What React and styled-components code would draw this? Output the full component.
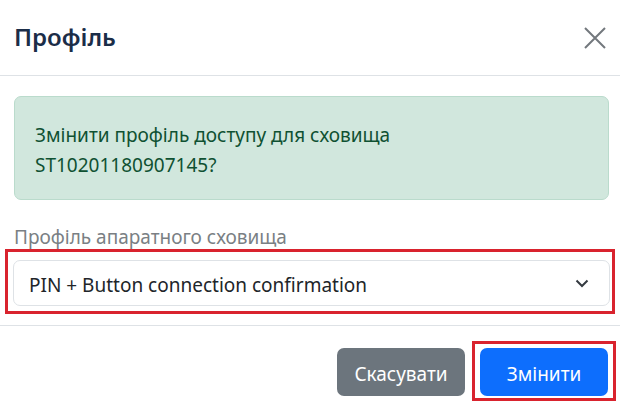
import styled, { createGlobalStyle } from 'styled-components';

const GlobalStyle = createGlobalStyle`
  html, body {
    margin: 0;
    padding: 0;
    background: #fff;
  }
  body {
    font-family: 'Noto Sans', 'Liberation Sans', sans-serif;
    color: #212529;
  }
`;

export default function App() {
  return (
    <>
      <GlobalStyle />
      <ModalStyled>
        <HeaderStyled>
          <TitleStyled>Профіль</TitleStyled>
          <CloseButtonStyled aria-label="Close">
            <svg width="24" height="24" viewBox="0 0 24 24">
              <path d="M2 2 L22 22 M22 2 L2 22" stroke="#73787d" strokeWidth="2" fill="none" />
            </svg>
          </CloseButtonStyled>
        </HeaderStyled>
        <BodyStyled>
          <AlertStyled>
            Змінити профіль доступу для сховища
            <br />
            ST10201180907145?
          </AlertStyled>
          <LabelStyled>Профіль апаратного сховища</LabelStyled>
          <HighlightStyled variant="select">
            <SelectStyled>
              <span>PIN + Button connection confirmation</span>
              <svg width="14" height="9" viewBox="0 0 14 9">
                <path d="M1.5 1.5 L7 7 L12.5 1.5" stroke="#343a40" strokeWidth="2" fill="none" />
              </svg>
            </SelectStyled>
          </HighlightStyled>
        </BodyStyled>
        <FooterStyled>
          <ButtonStyled type="secondary">Скасувати</ButtonStyled>
          <HighlightStyled variant="button">
            <ButtonStyled type="primary">Змінити</ButtonStyled>
          </HighlightStyled>
        </FooterStyled>
      </ModalStyled>
    </>
  );
}

const ModalStyled = styled.div`
  width: 620px;
  height: 411px;
  background: #fff;
  overflow: hidden;
`;

const HeaderStyled = styled.div`
  display: flex;
  align-items: center;
  justify-content: space-between;
  height: 76px;
  padding: 0 9px 0 14px;
  border-bottom: 1px solid #dee2e6;
  box-sizing: border-box;
`;

const TitleStyled = styled.h5`
  margin: 0;
  font-size: 24px;
  font-weight: 600;
  color: #1b2d48;
  line-height: 1.2;
`;

const CloseButtonStyled = styled.button`
  display: flex;
  align-items: center;
  justify-content: center;
  width: 32px;
  height: 32px;
  padding: 0;
  background: transparent;
  border: 0;
`;

const BodyStyled = styled.div`
  display: flex;
  flex-direction: column;
  padding: 20px 11px 10px 14px;
  height: 250px;
  box-sizing: border-box;
  border-bottom: 1px solid #dee2e6;
`;

const AlertStyled = styled.div`
  padding: 23px 20px 19px;
  background: #d1e7dd;
  border: 1px solid #badbcc;
  border-radius: 7px;
  color: #0f5132;
  font-size: 19px;
  line-height: 30px;
`;

const LabelStyled = styled.label`
  margin-top: 24px;
  font-size: 19px;
  line-height: 26px;
  color: #7a7f84;
`;

const HighlightStyled = styled.div`
  border: 3px solid #d9232e;
  align-self: ${(props) => (props.variant === 'select' ? 'stretch' : 'auto')};
  margin: ${(props) => (props.variant === 'select' ? '-1px -6px 0 -9px' : '0')};
  padding: ${(props) => (props.variant === 'select' ? '8px 2px 5px 5px' : '4px 5px 2px 5px')};
`;

const SelectStyled = styled.div`
  display: flex;
  align-items: center;
  justify-content: space-between;
  height: 46px;
  padding: 3px 20px 0 15px;
  border: 1px solid #dee2e6;
  border-radius: 7px;
  box-sizing: border-box;
  font-size: 19px;
  color: #212529;

  svg {
    margin-top: -3px;
  }
`;

const FooterStyled = styled.div`
  display: flex;
  align-items: flex-start;
  justify-content: flex-end;
  gap: 7px;
  padding: 15px 4px 0 0;
`;

const ButtonStyled = styled.button`
  width: 128px;
  height: 48px;
  margin-top: ${(props) => (props.type === 'secondary' ? '7px' : '0')};
  padding: 4px 0 0;
  border: 0;
  border-radius: 7px;
  font-family: inherit;
  font-size: 19px;
  color: #fff;
  background-color: ${(props) => (props.type === 'secondary' ? '#6c757d' : '#0d6efd')};
`;
